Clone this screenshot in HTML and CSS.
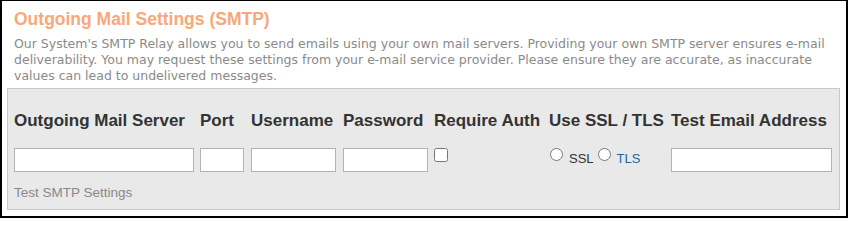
FILE: index.html
```html
<!DOCTYPE html>
<html>
<head>
<meta charset="utf-8">
<link rel="stylesheet" href="styles.css">
</head>
<body>
<div class="frame">
  <h2 class="title">Outgoing Mail Settings (SMTP)</h2>
  <p class="desc">Our System's SMTP Relay allows you to send emails using your own mail servers. Providing your own SMTP server ensures e-mail deliverability. You may request these settings from your e-mail service provider. Please ensure they are accurate, as inaccurate values can lead to undelivered messages.</p>
  <div class="panel">
    <div class="grid">
      <div class="head">Outgoing Mail Server</div>
      <div class="head">Port</div>
      <div class="head">Username</div>
      <div class="head">Password</div>
      <div class="head">Require Auth</div>
      <div class="head">Use SSL / TLS</div>
      <div class="head">Test Email Address</div>

      <div><input type="text" class="field w-server"></div>
      <div><input type="text" class="field w-port"></div>
      <div><input type="text" class="field w-user"></div>
      <div><input type="password" class="field w-pass"></div>
      <div><input type="checkbox" class="check"></div>
      <div class="radios">
        <input type="radio" name="sec" class="radio r1" id="ssl"><label for="ssl" class="rlabel ssl">SSL</label>
        <input type="radio" name="sec" class="radio r2" id="tls"><label for="tls" class="rlabel tls">TLS</label>
      </div>
      <div><input type="text" class="field w-email"></div>
    </div>
    <div class="test">Test SMTP Settings</div>
  </div>
</div>
</body>
</html>
```
FILE: styles.css
```css
html, body {
  margin: 0;
  padding: 0;
  background: #fff;
}
.frame {
  box-sizing: border-box;
  width: 848px;
  height: 218px;
  border: 2px solid #000;
  border-top-width: 1px;
  padding: 0 6px 0 5px;
  font-family: "Liberation Sans", Arial, sans-serif;
}
.title {
  margin: 8px 0 0 7px;
  font-size: 17.5px;
  line-height: 20px;
  font-weight: bold;
  color: #f9a77b;
}
.desc {
  margin: 7px 7px 0 7px;
  font-family: "DejaVu Sans", Verdana, sans-serif;
  font-size: 12.5px;
  line-height: 16px;
  color: #8a8a8a;
}
.panel {
  margin-top: 4px;
  border: 1px solid #c9c9c9;
  background: #e9e9e9;
  padding: 22px 6px 8px 6px;
  height: 122px;
  box-sizing: border-box;
}
.grid {
  display: grid;
  grid-template-columns: 186px 51px 92px 91px 115px 122px 1fr;
  row-gap: 17px;
  align-items: start;
}
.head {
  font-size: 17px;
  line-height: 20px;
  font-weight: bold;
  color: #333;
  white-space: nowrap;
}
.field {
  display: block;
  box-sizing: border-box;
  height: 24px;
  margin: 0;
  padding: 0 3px;
  border: 1px solid #b3b3b3;
  background: #fff;
  border-radius: 0;
  outline: none;
}
.w-server { width: 180px; }
.w-port { width: 44px; }
.w-user { width: 85px; }
.w-pass { width: 85px; }
.w-email { width: 161px; }
.check {
  display: block;
  margin: 0;
  width: 14px;
  height: 14px;
}
.radios {
  display: flex;
  align-items: flex-start;
}
.radio {
  margin: 0;
  width: 13px;
  height: 13px;
  flex: none;
}
.r1 { margin-left: 1px; }
.r2 { margin-left: 4px; }
.rlabel {
  margin-top: 3px;
  margin-left: 6px;
  font-size: 13px;
  line-height: 16px;
}
.ssl { color: #333; }
.tls { color: #1f65a0; margin-left: 6px; }
.test {
  margin-top: 13px;
  font-size: 13.5px;
  line-height: 16px;
  color: #888;
}
```
